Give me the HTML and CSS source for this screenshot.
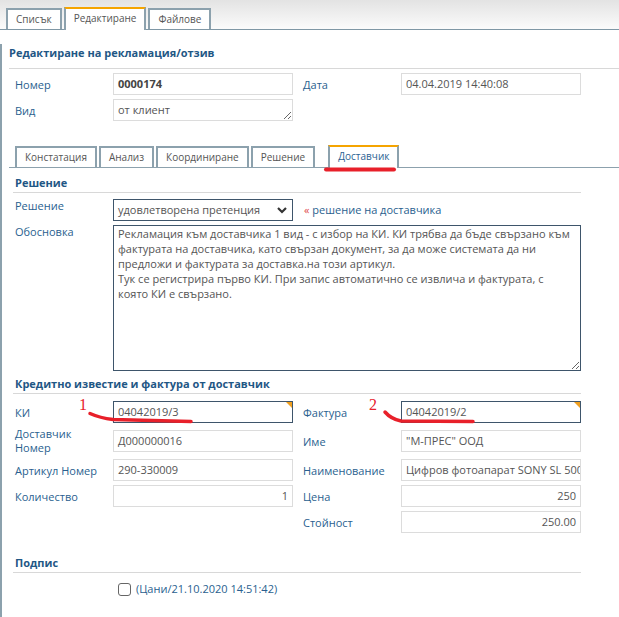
FILE: index.html
```html
<!DOCTYPE html>
<html lang="bg">
<head>
<meta charset="utf-8">
<title>Редактиране на рекламация</title>
<link rel="stylesheet" href="styles.css">
</head>
<body>
<div class="topbar">
  <div class="tab">Списък</div>
  <div class="tab active">Редактиране</div>
  <div class="tab">Файлове</div>
</div>
<div class="main">
  <h1 class="title">Редактиране на рекламация/отзив</h1>
  <div class="grid head-grid">
    <div class="lbl">Номер</div>
    <div class="field bold">0000174</div>
    <div class="lbl lbl-r">Дата</div>
    <div class="field">04.04.2019 14:40:08</div>
    <div class="lbl">Вид</div>
    <textarea class="field ta-small">от клиент</textarea>
  </div>

  <div class="subtabs">
    <div class="stab">Констатация</div>
    <div class="stab">Анализ</div>
    <div class="stab">Координиране</div>
    <div class="stab">Решение</div>
    <div class="stab active">Доставчик</div>
  </div>

  <section class="sec">
    <h2 class="sec-title">Решение</h2>
    <div class="grid res-grid">
      <div class="lbl top">Решение</div>
      <div class="field dark select">удовлетворена претенция
        <svg class="chev" width="10" height="7" viewBox="0 0 10 7"><polyline points="1,1 5,5 9,1" fill="none" stroke="#333" stroke-width="2.2"/></svg>
      </div>
      <div class="note"><span class="mark">«</span> решение на доставчика</div>
      <div class="lbl top">Обосновка</div>
      <textarea class="field dark ta-big">Рекламация към доставчика 1 вид - с избор на КИ. КИ трябва да бъде свързано към
фактурата на доставчика, като свързан документ, за да може системата да ни
предложи и фактурата за доставка.на този артикул.
Тук се регистрира първо КИ. При запис автоматично се извлича и фактурата, с
която КИ е свързано.</textarea>
    </div>
  </section>

  <section class="sec sec2">
    <h2 class="sec-title">Кредитно известие и фактура от доставчик</h2>
    <div class="grid cr-grid">
      <div class="lbl">КИ</div>
      <div class="field dark flag">04042019/3</div>
      <div class="lbl lbl-r">Фактура</div>
      <div class="field dark flag">04042019/2</div>

      <div class="lbl two">Доставчик<br>Номер</div>
      <div class="field">Д000000016</div>
      <div class="lbl lbl-r">Име</div>
      <div class="field">"М-ПРЕС" ООД</div>

      <div class="lbl">Артикул Номер</div>
      <div class="field">290-330009</div>
      <div class="lbl lbl-r">Наименование</div>
      <div class="field">Цифров фотоапарат SONY SL 500</div>

      <div class="lbl">Количество</div>
      <div class="field num">1</div>
      <div class="lbl lbl-r">Цена</div>
      <div class="field num">250</div>

      <div class="lbl lbl-r col3">Стойност</div>
      <div class="field num">250.00</div>
    </div>
  </section>

  <section class="sec sec3">
    <h2 class="sec-title">Подпис</h2>
    <div class="sign">
      <span class="cbox"></span>
      <span class="sign-text">(Цани/21.10.2020 14:51:42)</span>
    </div>
  </section>
</div>

<svg class="annot" width="619" height="617" viewBox="0 0 619 617">
  <line x1="326" y1="169.5" x2="394" y2="169.5" stroke="#e8202a" stroke-width="4" stroke-linecap="round"/>
  <text x="79" y="410" class="annot-num">1</text>
  <path d="M90 413.5 Q100 418 113 419.5 L191 421.5" fill="none" stroke="#e8202a" stroke-width="3.5" stroke-linecap="round" stroke-linejoin="round"/>
  <text x="369" y="410" class="annot-num">2</text>
  <path d="M385 412 Q391 419 401 421 L473 421.5" fill="none" stroke="#e8202a" stroke-width="3.5" stroke-linecap="round" stroke-linejoin="round"/>
</svg>
</body>
</html>
```

FILE: styles.css
```css
* { box-sizing: border-box; }
html, body { margin: 0; padding: 0; }
body {
  font-family: "Open Sans", "Noto Sans", sans-serif;
  font-size: 11px;
  color: #555;
  background: #fff;
  width: 619px;
  height: 617px;
  overflow: hidden;
  position: relative;
}

/* top tabs */
.topbar {
  height: 30px;
  display: flex;
  align-items: flex-end;
  gap: 2px;
  padding-left: 6px;
  background: linear-gradient(#e3e3e3, #fbfbfb);
  border-bottom: 1px solid #7f97a5;
}
.tab {
  border: 2px solid #8ca1ad;
  border-bottom: none;
  font-size: 10px;
  line-height: 19px;
  padding: 0 8px;
  color: #555;
  background: #fff;
}
.tab.active {
  border-top-color: #f5a400;
  padding-bottom: 2px;
  margin-bottom: -1px;
}

/* main area */
.main {
  border-left: 2px solid #8ca1ad;
  padding-left: 7px;
  height: 587px;
}
.title {
  margin: 14px 0 0;
  font-size: 11px;
  font-weight: 700;
  line-height: 18px;
  color: #1f5785;
  padding-bottom: 6px;
  border-bottom: 1px solid #d8d8d8;
}

.grid {
  display: grid;
  grid-template-columns: 98px 180px 108px 180px;
  row-gap: 4px;
  align-items: center;
}
.head-grid { margin: 4px 0 0 6px; }

.lbl { color: #2a5f8f; line-height: 15px; }
.lbl.two { line-height: 14px; }
.lbl-r { padding-left: 10px; }
.lbl.top { align-self: start; line-height: 14px; }
.col3 { grid-column: 3; }

.field {
  height: 22px;
  border: 1px solid #dcdcdc;
  padding: 0 4px;
  line-height: 20px;
  color: #555;
  background: #fff;
  white-space: nowrap;
  overflow: hidden;
  font-family: inherit;
  font-size: 11px;
  margin: 0;
}
.field.bold { font-weight: 700; color: #444; }
.field.dark { border-color: #3e556b; }
.field.num { text-align: right; }
.ta-small { resize: vertical; display: block; }

/* sub tabs */
.subtabs {
  margin-top: 25px;
  height: 22px;
  display: flex;
  align-items: flex-end;
  gap: 2px;
  padding-left: 6px;
  border-bottom: 1px solid #8ca1ad;
}
.stab {
  border: 2px solid #8ca1ad;
  border-bottom: none;
  font-size: 10px;
  line-height: 19px;
  padding: 0 8px;
  color: #555;
  background: #fff;
}
.stab.active {
  margin-left: 11px;
  border-top-color: #f5a400;
  color: #2b6293;
  padding-bottom: 2px;
  margin-bottom: -1px;
}

/* sections */
.sec { margin-left: 4px; width: 568px; }
.sec-title {
  margin: 7px 0 0;
  font-size: 11px;
  font-weight: 700;
  line-height: 16px;
  color: #1f5785;
  padding: 0 0 1px 2px;
  border-bottom: 1px solid #d8d8d8;
}
.res-grid { margin-top: 6px; padding-left: 2px; align-items: start; }
.select { position: relative; }
.chev { position: absolute; right: 5px; top: 7px; }
.note {
  grid-column: 3 / span 2;
  padding-left: 11px;
  line-height: 20px;
  align-self: center;
  color: #2a5f8f;
}
.mark { color: #e04848; }
.ta-big {
  grid-column: 2 / span 3;
  height: 146px;
  white-space: pre-wrap;
  line-height: 15px;
  padding: 0 4px;
  resize: vertical;
  overflow: hidden;
  display: block;
}

.sec2 .sec-title { margin-top: 5px; }
.cr-grid { margin-top: 7px; padding-left: 2px; }
.flag { position: relative; }
.flag::after {
  content: "";
  position: absolute;
  top: 0;
  right: 0;
  border-top: 6px solid #f0a020;
  border-left: 6px solid transparent;
}

.sec3 .sec-title { margin-top: 22px; }
.sign {
  margin-top: 9px;
  height: 14px;
  display: flex;
  align-items: center;
  padding-left: 105px;
}
.cbox {
  width: 13px;
  height: 13px;
  border: 1px solid #666;
  border-radius: 3px;
  background: #fff;
}
.sign-text { margin-left: 5px; color: #2a5f8f; line-height: 14px; }

/* annotations drawn over the screenshot */
.annot {
  position: absolute;
  top: 0;
  left: 0;
  pointer-events: none;
}
.annot-num {
  font-family: "Liberation Serif", serif;
  font-size: 16px;
  fill: #e8202a;
}
```
